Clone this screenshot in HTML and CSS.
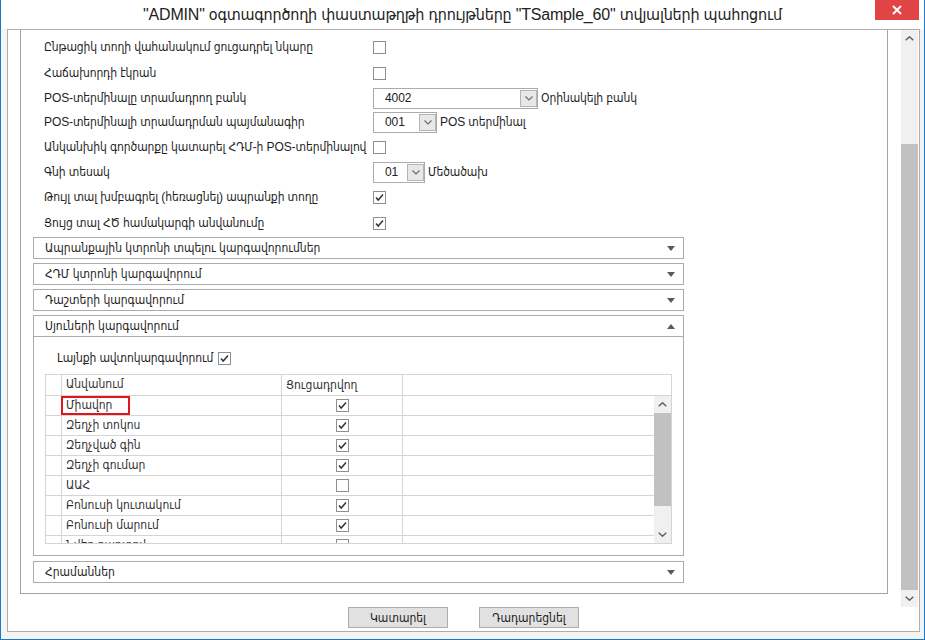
FILE: index.html
```html
<!DOCTYPE html>
<html lang="hy">
<head>
<meta charset="utf-8">
<title>Settings</title>
<link rel="stylesheet" href="styles.css">
</head>
<body>
<div class="window">
  <div class="titlebar">
    <div class="title">"ADMIN" օգտագործողի փաստաթղթի դրույթները "TSample_60" տվյալների պահոցում</div>
    <div class="close"><svg width="10" height="10" viewBox="0 0 10 10"><path d="M1 1L9 9M9 1L1 9" stroke="#fff" stroke-width="2"/></svg></div>
  </div>
  <div class="frame">
    <div class="viewport">
      <div class="panel">
        <div class="settings">
          <div class="row">
            <div class="lbl">Ընթացիկ տողի վահանակում ցուցադրել նկարը</div>
            <div class="ctl"><svg class="cb" viewBox="0 0 13 13"><rect x=".5" y=".5" width="12" height="12"/></svg></div>
          </div>
          <div class="row">
            <div class="lbl">Հաճախորդի էկրան</div>
            <div class="ctl"><svg class="cb" viewBox="0 0 13 13"><rect x=".5" y=".5" width="12" height="12"/></svg></div>
          </div>
          <div class="row short">
            <div class="lbl">POS-տերմինալը տրամադրող բանկ</div>
            <div class="ctl">
              <div class="combo wide"><span class="val">4002</span><span class="dd"><svg viewBox="0 0 8 5"><path d="M.5 .5L4 4L7.5 .5"/></svg></span></div>
              <span class="after">Օրինակելի բանկ</span>
            </div>
          </div>
          <div class="row short">
            <div class="lbl">POS-տերմինալի տրամադրման պայմանագիր</div>
            <div class="ctl">
              <div class="combo mid"><span class="val">001</span><span class="dd"><svg viewBox="0 0 8 5"><path d="M.5 .5L4 4L7.5 .5"/></svg></span></div>
              <span class="after">POS տերմինալ</span>
            </div>
          </div>
          <div class="row">
            <div class="lbl">Անկանխիկ գործարքը կատարել ՀԴՄ-ի POS-տերմինալով</div>
            <div class="ctl"><svg class="cb" viewBox="0 0 13 13"><rect x=".5" y=".5" width="12" height="12"/></svg></div>
          </div>
          <div class="row short">
            <div class="lbl">Գնի տեսակ</div>
            <div class="ctl">
              <div class="combo small"><span class="val">01</span><span class="dd"><svg viewBox="0 0 8 5"><path d="M.5 .5L4 4L7.5 .5"/></svg></span></div>
              <span class="after">Մեծածախ</span>
            </div>
          </div>
          <div class="row">
            <div class="lbl">Թույլ տալ խմբագրել (հեռացնել) ապրանքի տողը</div>
            <div class="ctl"><svg class="cb" viewBox="0 0 13 13"><rect x=".5" y=".5" width="12" height="12"/><path class="ck" d="M3 6.5L5.2 9L10 3.6"/></svg></div>
          </div>
          <div class="row">
            <div class="lbl">Ցույց տալ ՀԾ համակարգի անվանումը</div>
            <div class="ctl"><svg class="cb" viewBox="0 0 13 13"><rect x=".5" y=".5" width="12" height="12"/><path class="ck" d="M3 6.5L5.2 9L10 3.6"/></svg></div>
          </div>
        </div>

        <div class="sections">
          <div class="sec-h"><span>Ապրանքային կտրոնի տպելու կարգավորումներ</span><svg class="tri" viewBox="0 0 8 5"><path d="M0 0H8L4 5Z"/></svg></div>
          <div class="sec-h"><span>ՀԴՄ կտրոնի կարգավորում</span><svg class="tri" viewBox="0 0 8 5"><path d="M0 0H8L4 5Z"/></svg></div>
          <div class="sec-h"><span>Դաշտերի կարգավորում</span><svg class="tri" viewBox="0 0 8 5"><path d="M0 0H8L4 5Z"/></svg></div>
          <div class="sec-h open"><span>Սյուների կարգավորում</span><svg class="tri" viewBox="0 0 8 5"><path d="M0 5H8L4 0Z"/></svg></div>
          <div class="sec-body">
            <div class="auto-row"><span>Լայնքի ավտոկարգավորում</span><svg class="cb" viewBox="0 0 13 13"><rect x=".5" y=".5" width="12" height="12"/><path class="ck" d="M3 6.5L5.2 9L10 3.6"/></svg></div>
            <div class="grid">
              <div class="g-head">
                <div class="c rh"></div>
                <div class="c name">Անվանում</div>
                <div class="c show left">Ցուցադրվող</div>
                <div class="c rest"></div>
              </div>
              <div class="g-data">
                <div class="g-rows">
                  <div class="g-row"><div class="c rh"></div><div class="c name"><span class="mark">Միավոր</span></div><div class="c show"><svg class="cb" viewBox="0 0 13 13"><rect x=".5" y=".5" width="12" height="12"/><path class="ck" d="M3 6.5L5.2 9L10 3.6"/></svg></div><div class="c rest"></div></div>
                  <div class="g-row"><div class="c rh"></div><div class="c name">Զեղչի տոկոս</div><div class="c show"><svg class="cb" viewBox="0 0 13 13"><rect x=".5" y=".5" width="12" height="12"/><path class="ck" d="M3 6.5L5.2 9L10 3.6"/></svg></div><div class="c rest"></div></div>
                  <div class="g-row"><div class="c rh"></div><div class="c name">Զեղչված գին</div><div class="c show"><svg class="cb" viewBox="0 0 13 13"><rect x=".5" y=".5" width="12" height="12"/><path class="ck" d="M3 6.5L5.2 9L10 3.6"/></svg></div><div class="c rest"></div></div>
                  <div class="g-row"><div class="c rh"></div><div class="c name">Զեղչի գումար</div><div class="c show"><svg class="cb" viewBox="0 0 13 13"><rect x=".5" y=".5" width="12" height="12"/><path class="ck" d="M3 6.5L5.2 9L10 3.6"/></svg></div><div class="c rest"></div></div>
                  <div class="g-row"><div class="c rh"></div><div class="c name">ԱԱՀ</div><div class="c show"><svg class="cb" viewBox="0 0 13 13"><rect x=".5" y=".5" width="12" height="12"/></svg></div><div class="c rest"></div></div>
                  <div class="g-row"><div class="c rh"></div><div class="c name">Բոնուսի կուտակում</div><div class="c show"><svg class="cb" viewBox="0 0 13 13"><rect x=".5" y=".5" width="12" height="12"/><path class="ck" d="M3 6.5L5.2 9L10 3.6"/></svg></div><div class="c rest"></div></div>
                  <div class="g-row"><div class="c rh"></div><div class="c name">Բոնուսի մարում</div><div class="c show"><svg class="cb" viewBox="0 0 13 13"><rect x=".5" y=".5" width="12" height="12"/><path class="ck" d="M3 6.5L5.2 9L10 3.6"/></svg></div><div class="c rest"></div></div>
                  <div class="g-row"><div class="c rh"></div><div class="c name">Նվեր քարտով</div><div class="c show"><svg class="cb" viewBox="0 0 13 13"><rect x=".5" y=".5" width="12" height="12"/></svg></div><div class="c rest"></div></div>
                </div>
                <div class="g-scroll">
                  <div class="sb-btn"><svg viewBox="0 0 9 5"><path d="M.7 4.3L4.5 .8L8.3 4.3"/></svg></div>
                  <div class="g-thumb"></div>
                  <div class="g-track"></div>
                  <div class="sb-btn"><svg viewBox="0 0 9 5"><path d="M.7 .7L4.5 4.2L8.3 .7"/></svg></div>
                </div>
              </div>
            </div>
          </div>
          <div class="sec-h"><span>Հրամաններ</span><svg class="tri" viewBox="0 0 8 5"><path d="M0 0H8L4 5Z"/></svg></div>
        </div>
      </div>
      <div class="vscroll">
        <div class="sb-btn"><svg viewBox="0 0 9 5"><path d="M.7 4.3L4.5 .8L8.3 4.3"/></svg></div>
        <div class="sb-track"><div class="sb-thumb"></div></div>
        <div class="sb-btn"><svg viewBox="0 0 9 5"><path d="M.7 .7L4.5 4.2L8.3 .7"/></svg></div>
      </div>
    </div>
    <div class="btns">
      <button class="btn">Կատարել</button>
      <button class="btn">Դադարեցնել</button>
    </div>
  </div>
</div>
</body>
</html>
```

FILE: styles.css
```css
html, body {
  margin: 0;
  padding: 0;
}
body {
  font-family: "Liberation Sans", "DejaVu Sans Condensed", "DejaVu Sans", sans-serif;
  font-size: 12px;
  color: #1e1e1e;
  background: #f4f4f4;
}
.window {
  width: 925px;
  height: 640px;
  box-sizing: border-box;
  border: 1px solid #1979ca;
  border-top: none;
  background: #f4f4f4;
  display: flex;
  flex-direction: column;
  overflow: hidden;
}
.titlebar {
  height: 29px;
  flex: none;
  display: flex;
  align-items: flex-start;
  background: #fff;
  padding-left: 49px;
}
.title {
  flex: 1;
  text-align: center;
  line-height: 29px;
  font-size: 16px;
  letter-spacing: -0.2px;
  color: #222;
  white-space: nowrap;
}
.close {
  width: 44px;
  height: 20px;
  background: #e04444;
  margin-right: 5px;
  display: flex;
  align-items: center;
  justify-content: center;
}
.close svg { display: block; }
.frame {
  margin: 0 4px 0 6px;
  height: 603px;
  flex: none;
  box-sizing: border-box;
  border: 1px solid #adadad;
  background: #fff;
  display: flex;
  flex-direction: column;
}
.viewport {
  height: 577px;
  flex: none;
  display: flex;
}
.panel {
  margin: 0 13px 13px 12px;
  width: 868px;
  flex: none;
  box-sizing: border-box;
  border: 1px solid #a3a3a3;
  border-top: none;
  padding-top: 4px;
  overflow: hidden;
}
.settings {
  padding-left: 23px;
  letter-spacing: -0.1px;
}
.row {
  height: 26px;
  display: flex;
  align-items: center;
}
.row.short { height: 24px; }
.lbl {
  width: 329px;
  flex: none;
  white-space: nowrap;
}
.ctl {
  display: flex;
  align-items: center;
}
.cb {
  width: 13px;
  height: 13px;
  display: block;
  flex: none;
}
.cb rect { fill: #fff; stroke: #8f8f8f; }
.cb .ck { fill: none; stroke: #333; stroke-width: 1.5; }
.combo {
  height: 21px;
  box-sizing: border-box;
  border: 1px solid #ababab;
  background: #fff;
  display: flex;
  align-items: center;
  justify-content: space-between;
  padding-left: 11px;
}
.combo.wide { width: 165px; }
.combo.mid { width: 64px; }
.combo.small { width: 52px; }
.combo .val { color: #222; }
.dd {
  width: 17px;
  height: 17px;
  box-sizing: border-box;
  border: 1px solid #b4b4b4;
  background: #e8e8e8;
  display: flex;
  align-items: center;
  justify-content: center;
}
.dd svg { width: 8px; height: 5px; display: block; }
.dd path { fill: none; stroke: #6a6a6a; stroke-width: 1.1; }
.after { margin-left: 3px; white-space: nowrap; }

.sections {
  margin: 1px 0 0 12px;
  width: 651px;
}
.sec-h {
  height: 22px;
  box-sizing: border-box;
  border: 1px solid #ababab;
  display: flex;
  align-items: center;
  justify-content: space-between;
  padding: 0 8px 0 11px;
  margin-bottom: 4px;
  white-space: nowrap;
}
.sec-h.open { margin-bottom: 0; }
.tri { width: 8px; height: 5px; display: block; }
.tri path { fill: #5a5a5a; }
.sec-body {
  height: 219px;
  box-sizing: border-box;
  border: 1px solid #ababab;
  border-top: none;
  padding: 8px 11px 0 11px;
  margin-bottom: 5px;
}
.auto-row {
  height: 26px;
  display: flex;
  align-items: center;
  gap: 5px;
  padding-left: 12px;
  white-space: nowrap;
  letter-spacing: -0.1px;
}
.grid {
  margin-top: 3px;
  height: 170px;
  box-sizing: border-box;
  border: 1px solid #d4d4d4;
  display: flex;
  flex-direction: column;
  color: #333;
}
.g-head {
  height: 21px;
  flex: none;
  box-sizing: border-box;
  border-bottom: 1px solid #d4d4d4;
  display: flex;
}
.c {
  box-sizing: border-box;
  border-right: 1px solid #d4d4d4;
  flex: none;
  line-height: 19px;
  padding-left: 4px;
  white-space: nowrap;
}
.c.rh { width: 16px; padding: 0; }
.c.name { width: 220px; position: relative; }
.c.show {
  width: 121px;
  display: flex;
  align-items: center;
  justify-content: center;
  padding-left: 0;
}
.c.show.left { justify-content: flex-start; padding-left: 4px; }
.c.rest { flex: 1; border-right: none; }
.g-data {
  height: 147px;
  display: flex;
  overflow: hidden;
}
.g-rows {
  flex: 1;
  overflow: hidden;
}
.g-row {
  height: 20px;
  box-sizing: border-box;
  border-bottom: 1px solid #d4d4d4;
  display: flex;
}
.mark::after {
  content: "";
  position: absolute;
  left: -1px;
  top: 0;
  width: 69px;
  height: 19px;
  box-sizing: border-box;
  border: 2px solid #e0161e;
}
.g-scroll {
  width: 17px;
  flex: none;
  background: #f0f0f0;
  display: flex;
  flex-direction: column;
}
.g-thumb { height: 93px; background: #c1c1c1; flex: none; }
.g-track { flex: 1; }
.sb-btn {
  height: 17px;
  flex: none;
  display: flex;
  align-items: center;
  justify-content: center;
}
.sb-btn svg { width: 9px; height: 5px; display: block; }
.sb-btn path { fill: none; stroke: #606060; stroke-width: 1.5; }
.vscroll {
  width: 17px;
  flex: none;
  background: #f0f0f0;
  display: flex;
  flex-direction: column;
}
.sb-track {
  flex: 1;
  padding-top: 97px;
  display: flex;
  flex-direction: column;
}
.sb-thumb { flex: 1; background: #c1c1c1; }
.btns {
  display: flex;
  justify-content: center;
  gap: 31px;
}
.btn {
  width: 100px;
  height: 21px;
  box-sizing: border-box;
  border: 1px solid #adadad;
  background: #e1e1e1;
  font-family: inherit;
  font-size: 12px;
  color: #222;
  padding: 0;
  margin: 0;
}
```
